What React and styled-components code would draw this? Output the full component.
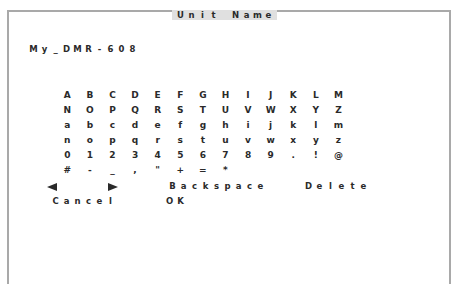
import React from 'react'
import styled, { createGlobalStyle } from 'styled-components'

const Global = createGlobalStyle`
  html, body {
    margin: 0;
    padding: 0;
    background: #fff;
    width: 454px;
    height: 284px;
    overflow: hidden;
  }
`

const Screen = styled.div`
  width: 454px;
  height: 284px;
  padding-top: 10px;
  box-sizing: border-box;
  font-family: "DejaVu Sans", sans-serif;
  font-weight: bold;
  color: #2a2a2a;
`

const Frame = styled.div`
  position: relative;
  margin-left: 7px;
  width: 444px;
  height: 274px;
  box-sizing: border-box;
  border: 2px solid #a9a9a9;
  border-bottom: none;
  padding: 25px 0 0 19px;
`

const Title = styled.div`
  position: absolute;
  top: -2px;
  left: 163px;
  height: 10px;
  padding: 0 3px;
  background: #e0e0e0;
  display: flex;
  align-items: center;
`

const Spaced = styled.span`
  display: inline-flex;
  font-size: ${p => p.size || 8.5}px;
  line-height: 11px;
`

const Cell = styled.span`
  display: inline-block;
  width: ${p => p.pitch || 11}px;
  text-align: center;
`

const SpacedText = ({ children, size, pitch }) => (
  <Spaced size={size}>
    {children.split('').map((c, i) => (
      <Cell key={i} pitch={pitch}>{c === ' ' ? '\u00a0' : c}</Cell>
    ))}
  </Spaced>
)

const Keys = styled.div`
  display: grid;
  grid-template-columns: repeat(13, 22.6px);
  grid-auto-rows: 15px;
  margin: 31px 0 0 28px;
  font-size: 9px;
`

const Key = styled.span`
  display: flex;
  align-items: center;
  justify-content: center;
`

const Controls = styled.div`
  margin: 2px 0 0 19px;
  display: grid;
  grid-auto-rows: 15px;
`

const ControlRow = styled.div`
  display: flex;
  align-items: center;
`

const Slot = styled.div`
  width: ${p => p.w}px;
  margin-left: ${p => p.ml || 0}px;
  display: flex;
  align-items: center;
`

const Arrow = styled.svg`
  width: 10px;
  height: 8px;
  fill: #2a2a2a;
`

const rows = [
  'ABCDEFGHIJKLM',
  'NOPQRSTUVWXYZ',
  'abcdefghijklm',
  'nopqrstuvwxyz',
  '0123456789.!@',
  '#-_,"+=*',
]

export default function App() {
  return (
    <Screen>
      <Global />
      <Frame>
        <Title>
          <SpacedText size={8.5} pitch={11}>Unit Name</SpacedText>
        </Title>
        <SpacedText pitch={11}>My_DMR-608</SpacedText>
        <Keys>
          {rows.map((r, ri) =>
            r.split('').map((c, ci) => <Key key={ri + '-' + ci}>{c}</Key>)
          )}
        </Keys>
        <Controls>
          <ControlRow>
            <Slot w={61}>
              <Arrow viewBox="0 0 10 8"><path d="M0 4 L10 0 L10 8 Z" /></Arrow>
            </Slot>
            <Slot w={59}>
              <Arrow viewBox="0 0 10 8"><path d="M10 4 L0 0 L0 8 Z" /></Arrow>
            </Slot>
            <Slot w={136}>
              <SpacedText>Backspace</SpacedText>
            </Slot>
            <Slot w={80}>
              <SpacedText>Delete</SpacedText>
            </Slot>
          </ControlRow>
          <ControlRow>
            <Slot w={114} ml={3}>
              <SpacedText>Cancel</SpacedText>
            </Slot>
            <Slot w={40}>
              <SpacedText>OK</SpacedText>
            </Slot>
          </ControlRow>
        </Controls>
      </Frame>
    </Screen>
  )
}
